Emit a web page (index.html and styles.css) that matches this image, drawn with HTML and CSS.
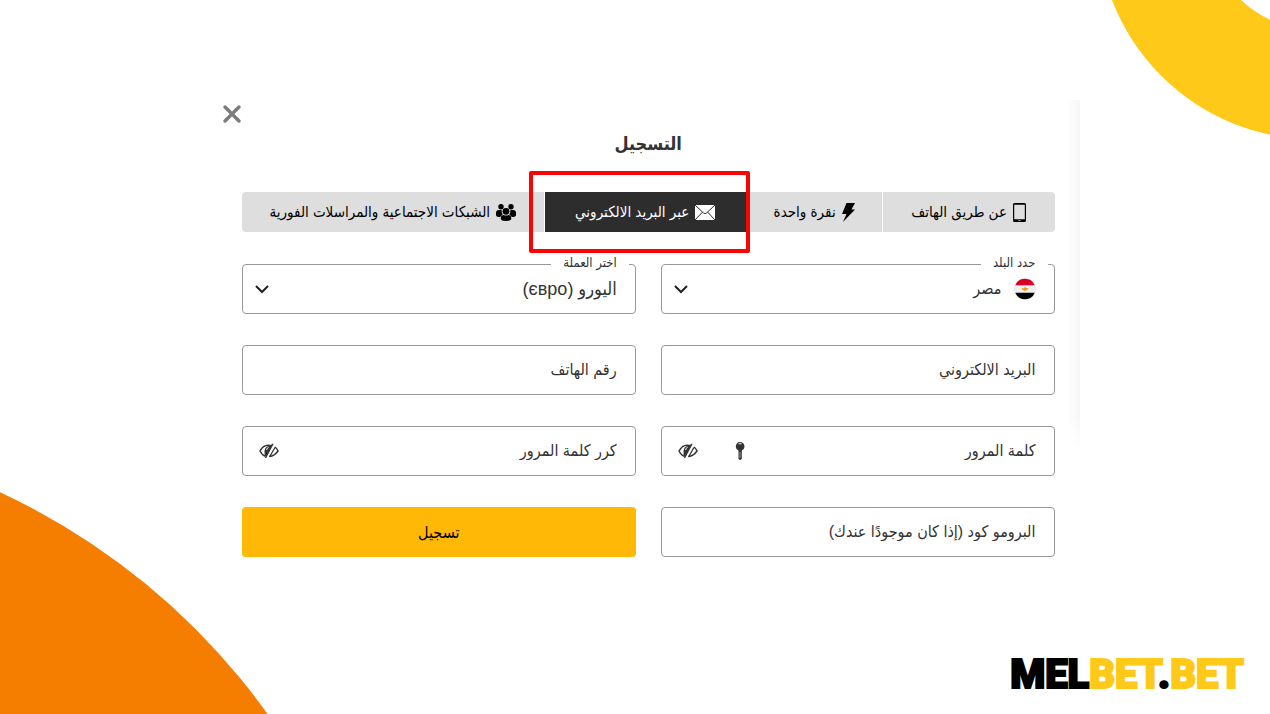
FILE: index.html
```html
<!DOCTYPE html>
<html lang="ar" dir="rtl">
<head>
  <meta charset="UTF-8">
  <meta name="viewport" content="width=device-width, initial-scale=1.0">
  <title>التسجيل</title>
  <link rel="stylesheet" href="styles.css">
</head>
<body>
  <svg class="ring" width="160" height="140" viewBox="0 0 160 140" aria-hidden="true">
    <circle cx="205" cy="-78" r="162.5" fill="none" stroke="#fec919" stroke-width="110"/>
  </svg>
  <svg class="wave" width="270" height="224" viewBox="0 0 270 224" aria-hidden="true">
    <circle cx="-287" cy="621" r="682" fill="#f57d00"/>
  </svg>

  <main class="panel">
    <div class="close-row">
      <button class="close" type="button" aria-label="إغلاق">
        <svg width="20" height="20" viewBox="0 0 20 20"><path d="M3 3l14 14M17 3L3 17" stroke="#7d7d7d" stroke-width="3.500" stroke-linecap="round"/></svg>
      </button>
    </div>
    <div class="content">
      <h1>التسجيل</h1>

      <div class="tabs">
        <button class="tab" type="button">
          <svg width="13" height="19" viewBox="0 0 13 19"><path fill-rule="evenodd" d="M1.500 0h10q1.500 0 1.500 1.500v16q0 1.500-1.500 1.500h-10Q0 19 0 17.500v-16Q0 0 1.500 0zM1.200 1.700v14.600h10.600V1.700zM5.500 17.200v.8h2v-.8z"/></svg>
          <span>عن طريق الهاتف</span>
        </button>
        <button class="tab" type="button">
          <svg width="13" height="19" viewBox="0 0 13 19"><path d="M4.500 0H13L9.500 6.500H13L1 19l3.500-8H0z"/></svg>
          <span>نقرة واحدة</span>
        </button>
        <button class="tab active" type="button">
          <svg width="20" height="15" viewBox="0 0 20 15"><path d="M0 0h20v15H0z"/><path d="M0 0l8.500 8q1.500 1.200 3 0L20 0M0 15l7.500-8M20 15l-7.500-8" fill="none" stroke="#2d2d2d"/></svg>
          <span>عبر البريد الالكتروني</span>
        </button>
        <button class="tab" type="button">
          <svg width="20" height="17" viewBox="0 0 20 17"><circle cx="5" cy="2.700" r="2.700"/><circle cx="15" cy="2.700" r="2.700"/><path d="M0 9q0-3 3-3h2.700q-.4 2.500 1 4.200L4.200 13Q0 13 0 11zM20 9q0-3-3-3h-2.700q.4 2.500-1 4.200l2.500 2.800q4.200 0 4.200-2z"/><circle cx="10" cy="7.300" r="3.400"/><path d="M4.700 14.500q0-3.500 3-3.500 2.300 1.200 4.600 0 3 0 3 3.500 0 2.500-5.300 2.500t-5.300-2.500z"/></svg>
          <span>الشبكات الاجتماعية والمراسلات الفورية</span>
        </button>
      </div>

      <form class="form">
        <div class="field">
          <label class="field-label" for="country">حدد البلد</label>
          <svg class="flag" width="22" height="22" viewBox="0 0 22 22" aria-hidden="true">
            <circle cx="11" cy="11" r="10.500" fill="#f0f0f0" stroke="#ddd" stroke-width=".5"/>
            <path d="M1.300 7.300a10.500 10.500 0 0 1 19.400 0z" fill="#d80027"/>
            <path d="M1.300 14.700a10.500 10.500 0 0 0 19.400 0z" fill="#000"/>
            <path d="M7.500 10l2.500.2 1-1.400 1 1.400 2.500-.2-1.500 2.300h-1l-1 1-1-1H9z" fill="#ff9811"/>
          </svg>
          <select id="country"><option>مصر</option></select>
          <svg class="arrow" width="14" height="9" viewBox="0 0 14 9" aria-hidden="true"><path d="M1 1l6 6 6-6"/></svg>
        </div>
        <div class="field">
          <label class="field-label" for="currency">اختر العملة</label>
          <select id="currency" class="currency"><option>اليورو (євро)</option></select>
          <svg class="arrow" width="14" height="9" viewBox="0 0 14 9" aria-hidden="true"><path d="M1 1l6 6 6-6"/></svg>
        </div>
        <div class="field">
          <input type="email" placeholder="البريد الالكتروني" aria-label="البريد الالكتروني">
        </div>
        <div class="field">
          <input type="tel" dir="rtl" placeholder="رقم الهاتف" aria-label="رقم الهاتف">
        </div>
        <div class="field">
          <input type="password" placeholder="كلمة المرور" aria-label="كلمة المرور">
          <button class="icon key" type="button" aria-label="توليد كلمة مرور">
            <svg width="10" height="18" viewBox="0 0 10 18"><path fill-rule="evenodd" d="M5 0a4.500 4.500 0 0 1 1.800 8.600V17L5 18l-1.500-1V8.600A4.500 4.500 0 0 1 5 0zM3.500 1.300v1h3v-1z"/><path d="M5 10v6" stroke="#fff" stroke-width=".5"/></svg>
          </button>
          <button class="icon" type="button" aria-label="إظهار كلمة المرور">
            <svg width="20" height="16" viewBox="0 0 20 16"><path d="M12.500 2.800Q5 .5 1 8q2 4 5 5.200M16 4Q18 5.500 19 8q-3.500 5-8.500 5.500" fill="none" stroke="#333" stroke-width="1.500"/><path d="M13.500 1L7 14.500Q5 12 5.500 8 6 3.500 10 3z"/><path d="M14 .8L6.500 15M16 4.500L10.500 14" stroke="#333" stroke-width="1.300"/><path d="M7.600 7q0-2 2-2.500" fill="none" stroke="#fff"/></svg>
          </button>
        </div>
        <div class="field">
          <input type="password" placeholder="كرر كلمة المرور" aria-label="كرر كلمة المرور">
          <button class="icon" type="button" aria-label="إظهار كلمة المرور">
            <svg width="20" height="16" viewBox="0 0 20 16"><path d="M12.500 2.800Q5 .5 1 8q2 4 5 5.200M16 4Q18 5.500 19 8q-3.500 5-8.500 5.500" fill="none" stroke="#333" stroke-width="1.500"/><path d="M13.500 1L7 14.500Q5 12 5.500 8 6 3.500 10 3z"/><path d="M14 .8L6.500 15M16 4.500L10.500 14" stroke="#333" stroke-width="1.300"/><path d="M7.600 7q0-2 2-2.500" fill="none" stroke="#fff"/></svg>
          </button>
        </div>
        <div class="field">
          <input type="text" placeholder="البرومو كود (إذا كان موجودًا عندك)" aria-label="البرومو كود">
        </div>
        <button class="submit" type="submit">تسجيل</button>
      </form>
    </div>
  </main>

  <a class="logo" href="#" dir="ltr">MEL<span>BET</span>.<span>BET</span></a>
</body>
</html>
```
FILE: styles.css
```css
* {
    box-sizing: border-box;
}

body {
    margin: 0;
    min-height: 100vh;
    position: relative;
    overflow-x: hidden;
    background-color: #fff;
    color: #333;
    font-family: "Liberation Sans", "DejaVu Sans Condensed", "DejaVu Sans", sans-serif;
    font-size: 16px;
}

button, input, select {
    font: inherit;
    color: inherit;
}

button {
    border: none;
    padding: 0;
    background: none;
    cursor: pointer;
}

svg {
    display: block;
    flex: none;
}

/* background shapes */
.ring {
    position: absolute;
    top: 0;
    right: 0;
}
.wave {
    position: absolute;
    bottom: 0;
    left: 0;
}

.panel {
    position: relative;
    margin: 0 15% 0 17%;
    padding-top: 104px;
}
.panel::after {
    content: "";
    position: absolute;
    top: 100px;
    right: 0;
    width: 12px;
    height: 350px;
    background: linear-gradient(to right, #fff, #f5f5f5);
    -webkit-mask-image: linear-gradient(#000 90%, transparent);
    mask-image: linear-gradient(#000 90%, transparent);
}

.close-row {
    display: flex;
    justify-content: flex-end;
    padding: 0 6px;
}

.content {
    padding: 0 25px 0 26px;
}

h1 {
    margin: 4px 0 32px;
    font-size: 18px;
    line-height: 32px;
    text-align: center;
}

.tabs {
    display: grid;
    grid-template-columns: 172fr 135fr 201fr 302fr;
    gap: 1px;
    margin-bottom: 32px;
}
.tab {
    position: relative;
    display: flex;
    align-items: center;
    justify-content: center;
    gap: 6px;
    height: 40px;
    background-color: #dedede;
    color: #000;
    fill: #000;
    font-size: 15px;
    white-space: nowrap;
}
.tab:first-child {
    border-radius: 0 4px 4px 0;
}
.tab:last-child {
    border-radius: 4px 0 0 4px;
}
.tab.active {
    background-color: #2d2d2d;
    color: #fff;
    fill: #fff;
}
.tab.active::after {
    content: "";
    position: absolute;
    z-index: 1;
    inset: -21px -4px -21px -16px;
    border: 4px solid #f90404;
    border-radius: 2px;
}

.form {
    display: grid;
    grid-template-columns: 1fr 1fr;
    gap: 31px 25px;
}

.field {
    position: relative;
    display: flex;
    align-items: center;
    height: 50px;
    padding: 0 18px 0 12px;
    border: 1px solid #999;
    border-radius: 4px;
}
.field input, .field select {
    flex: 1;
    min-width: 0;
    height: 48px;
    padding: 0;
    border: none;
    outline: none;
    background: none;
    appearance: none;
}
.field select {
    line-height: 32px;
}
.field .currency {
    font-size: 18px;
}
.field input::placeholder {
    color: #333;
    opacity: 1;
}
.field-label {
    position: absolute;
    top: -10px;
    right: 6px;
    padding: 0 12px;
    background-color: #fff;
    font-size: 13px;
    line-height: 16px;
}
.flag {
    margin-left: 12px;
}
.arrow {
    fill: none;
    stroke: #222;
    stroke-width: 2;
}
.icon {
    padding: 0 4px;
    fill: #333;
}
.key {
    margin-left: 29px;
}

.submit {
    height: 50px;
    border-radius: 4px;
    background-color: #ffb805;
    color: #000;
}

.logo {
    position: absolute;
    right: 26px;
    bottom: 14px;
    color: #000;
    font-family: Roboto, "Liberation Sans", sans-serif;
    font-size: 40px;
    font-weight: 900;
    line-height: 50px;
    text-decoration: none;
    -webkit-text-stroke: 2px currentColor;
}
.logo span {
    color: #fec919;
}
```
